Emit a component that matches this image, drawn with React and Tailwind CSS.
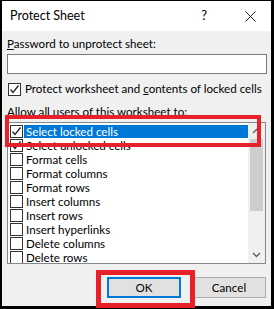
import React from "react";

function Check({ className = "" }) {
  return (
    <svg width="11" height="11" viewBox="0 0 11 11" className={className}>
      <polyline points="1.5,5.5 4,8.5 9.5,1.5" fill="none" stroke="#222" strokeWidth="1.3" />
    </svg>
  );
}

function Box({ checked }) {
  return (
    <div className="w-[13px] h-[13px] border border-[#333] bg-white flex items-center justify-center shrink-0">
      {checked && <Check />}
    </div>
  );
}

export default function App() {
  const items = [
    "Select locked cells",
    "Select unlocked cells",
    "Format cells",
    "Format columns",
    "Format rows",
    "Insert columns",
    "Insert rows",
    "Insert hyperlinks",
    "Delete columns",
    "Delete rows",
  ];
  return (
    <div
      className="relative w-[274px] h-[309px] bg-black pt-px pl-[2px] pr-[3px] pb-[3px] overflow-hidden text-[11.6px] text-black whitespace-nowrap"
      style={{ fontFamily: 'Lato, "Noto Sans", sans-serif' }}
    >
      <div className="flex flex-col h-full bg-[#f0f0f0]">
        <div className="h-[30px] bg-white flex items-center pl-[8px] shrink-0">
          <span className="text-[12.5px] flex-1">Protect Sheet</span>
          <span className="text-[13px] mr-[38px]">?</span>
          <svg width="11" height="11" viewBox="0 0 11 11" className="mr-[15px]">
            <path d="M0.5 0.5 L10.5 10.5 M10.5 0.5 L0.5 10.5" stroke="#222" strokeWidth="1" />
          </svg>
        </div>
        <div className="flex flex-col pl-[5px] pr-[4px]">
          <div className="h-[16px] mt-[5px] leading-[16px]">
            <span className="underline">P</span>assword to unprotect sheet:
          </div>
          <div className="h-[20px] mt-[2px] bg-white border border-[#7a7a7a]" />
          <div className="h-[16px] mt-[7px] flex items-center gap-[4px] pl-[1px]">
            <Box checked />
            <span className="leading-[16px]">
              Protect worksheet and <span className="underline">c</span>ontents of locked cells
            </span>
          </div>
          <div className="h-[16px] mt-[7px] leading-[16px]">Allow all users of this worksheet to:</div>
          <div className="h-[142px] mt-[2px] mr-px bg-white border border-[#828790] flex">
            <div className="flex-1 flex flex-col pt-px overflow-hidden">
              {items.map((t, i) => (
                <div key={t} className="h-[14px] flex items-center shrink-0 pl-[2px]">
                  <Box checked={i < 2} />
                  <div
                    className={
                      "ml-[1px] h-[13px] flex items-center pl-[2px] flex-1 leading-[13px] " +
                      (i === 0 ? "bg-[#0078d7] text-white" : "")
                    }
                  >
                    {t}
                  </div>
                </div>
              ))}
            </div>
            <div className="w-[17px] bg-[#f0f0f0] flex flex-col shrink-0">
              <div className="h-[16px] flex items-center justify-center">
                <svg width="9" height="6" viewBox="0 0 9 6">
                  <polyline points="1,5 4.5,1.5 8,5" fill="none" stroke="#606060" strokeWidth="1.4" />
                </svg>
              </div>
              <div className="h-[72px] mx-[2px] bg-[#cdcdcd]" />
              <div className="flex-1" />
              <div className="h-[16px] flex items-center justify-center">
                <svg width="9" height="6" viewBox="0 0 9 6">
                  <polyline points="1,1 4.5,4.5 8,1" fill="none" stroke="#606060" strokeWidth="1.4" />
                </svg>
              </div>
            </div>
          </div>
          <div className="mt-[13px] flex justify-end gap-[11px] pr-[1px]">
            <div className="w-[74px] h-[21px] bg-[#e1e1e1] border-2 border-[#0078d7] flex items-center justify-center">
              OK
            </div>
            <div className="w-[74px] h-[21px] bg-[#e1e1e1] border border-[#adadad] flex items-center justify-center">
              Cancel
            </div>
          </div>
        </div>
      </div>
      <div className="absolute left-[5px] top-[115px] w-[256px] h-[32px] border-4 border-[#e8202a]" />
      <div className="absolute left-[96px] top-[270px] w-[99px] h-[38px] border-[5px] border-[#e8202a]" />
    </div>
  );
}
